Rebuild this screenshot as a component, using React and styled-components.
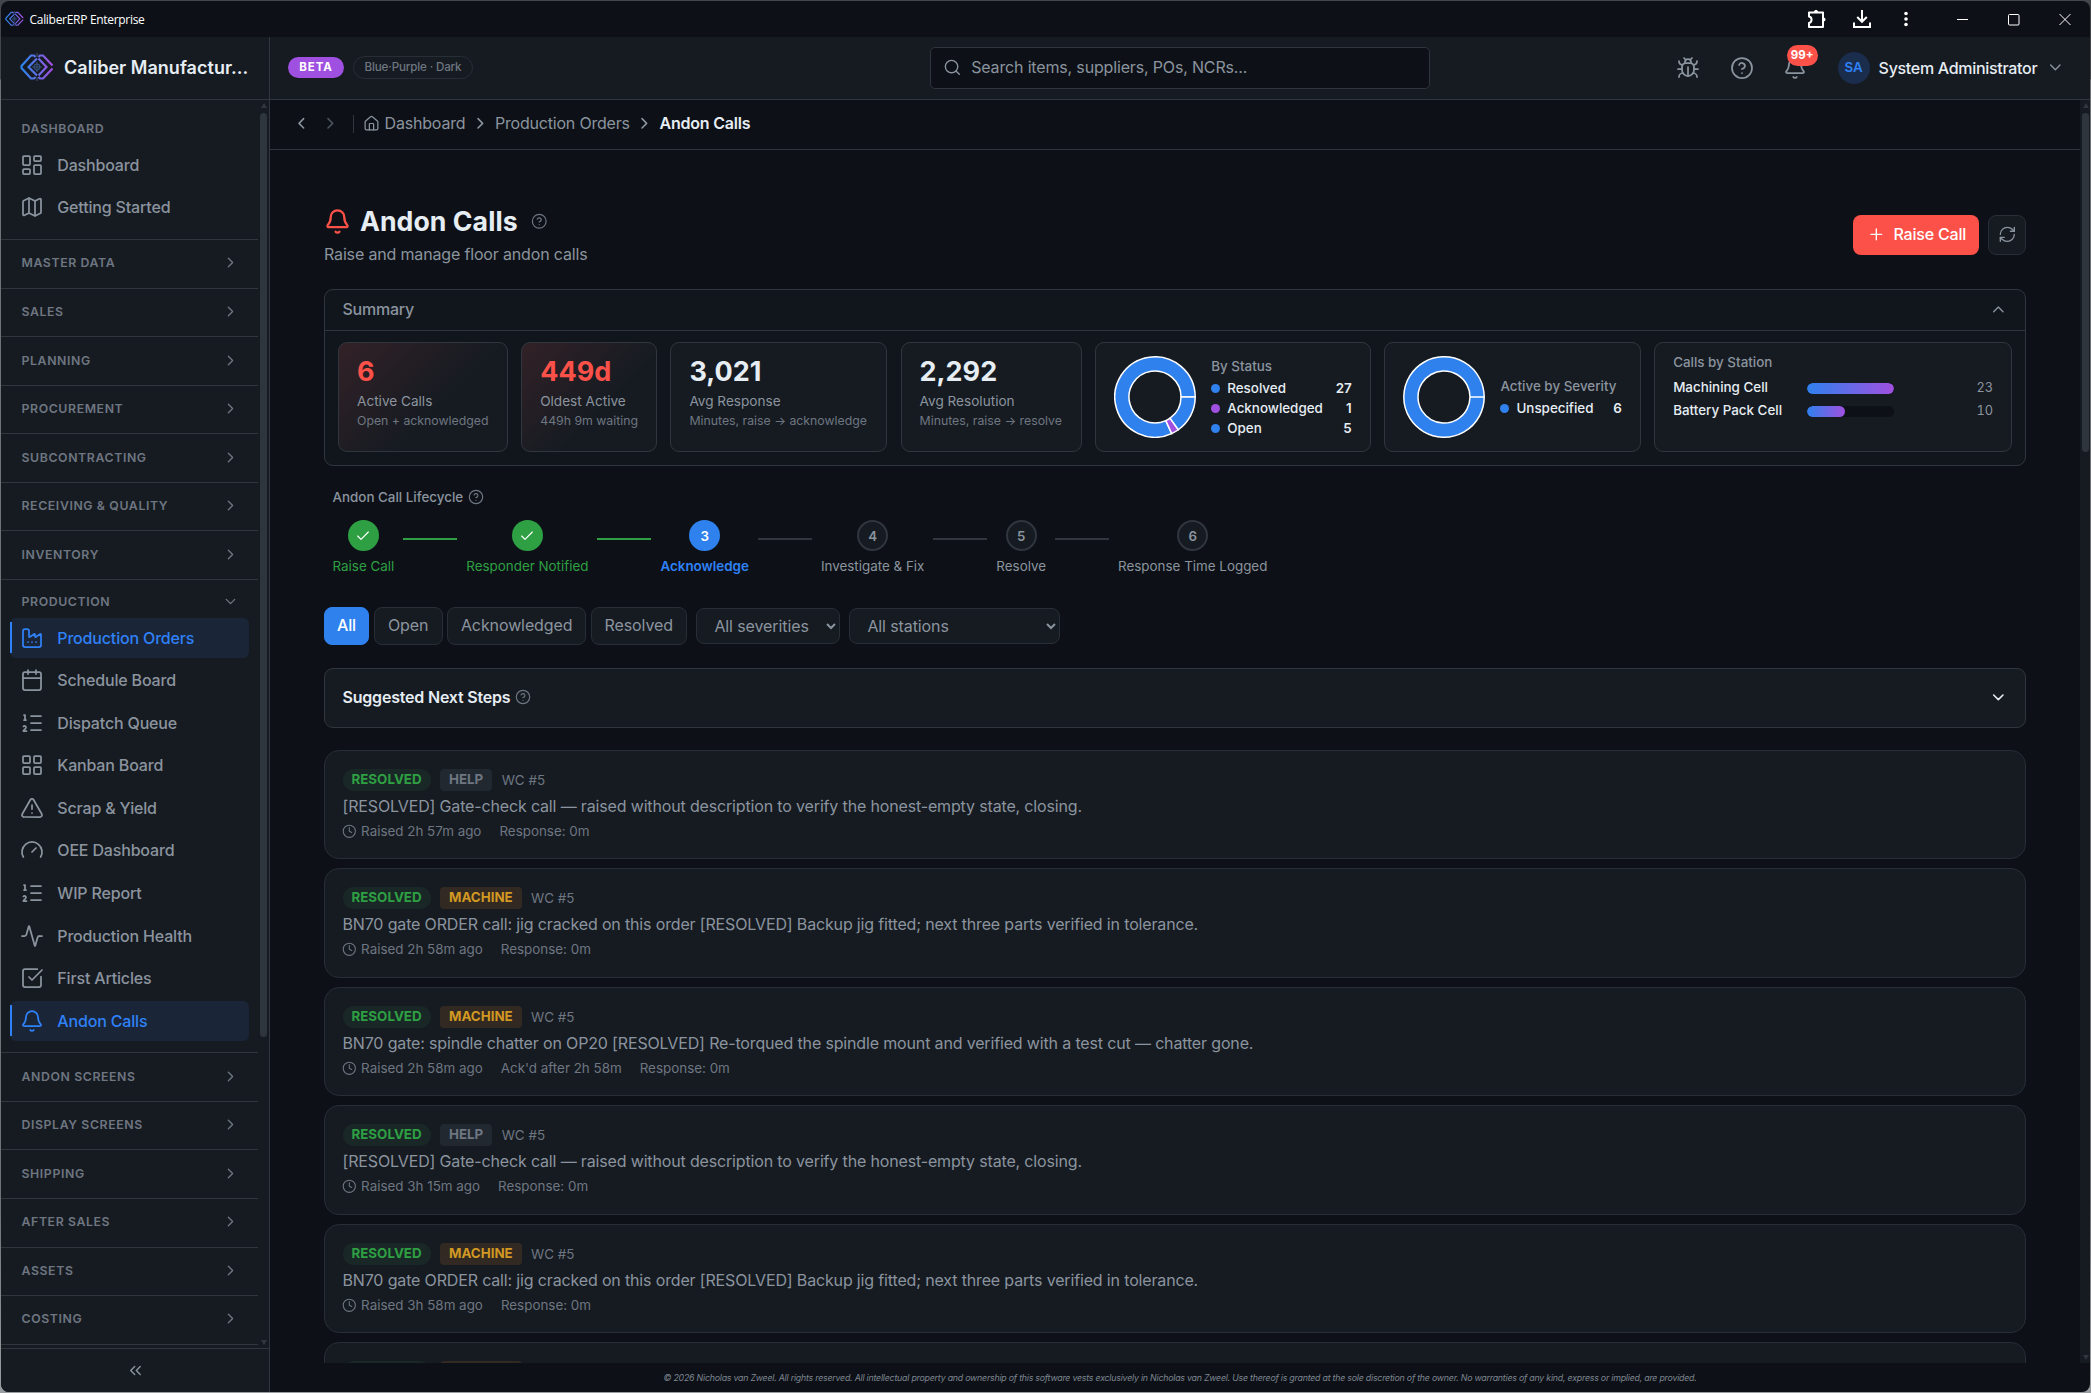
import React, { useState } from "react";
import styled, { createGlobalStyle, css } from "styled-components";
import {
  Activity,
  Bell,
  Bug,
  Calendar,
  Check,
  ChevronDown,
  ChevronLeft,
  ChevronRight,
  ChevronUp,
  ChevronsLeft,
  CircleQuestionMark,
  Clock,
  Factory,
  Gauge,
  House,
  LayoutDashboard,
  LayoutGrid,
  ListOrdered,
  Map,
  Plus,
  RefreshCw,
  Search,
  SquareCheckBig,
  TriangleAlert,
} from "lucide-react";

const colors = {
  bg: "#0d1117",
  panel: "#11161d",
  surface: "#161b22",
  border: "#30363d",
  borderSoft: "#282e36",
  text: "#e6edf3",
  muted: "#8b949e",
  dim: "#6e7681",
  blue: "#2f81f7",
  fill: "#2f81ed",
  purple: "#a050e0",
  green: "#2ea043",
  amber: "#d29922",
  red: "#fb5149",
};

const GlobalStyle = createGlobalStyle`
  * {
    box-sizing: border-box;
  }
  body {
    margin: 0;
    background: #0d1117;
    color: ${colors.text};
    font-family: Inter, "Liberation Sans", sans-serif;
    font-size: 16px;
  }
  button, select {
    font-family: inherit;
  }
  svg {
    flex-shrink: 0;
  }
`;

const Desktop = styled.div`
  width: 2091px;
  height: 1393px;
  padding: 1px;
  overflow: hidden;
  background: linear-gradient(#43474b, #43474b 79px, #6f7376 80px, #6f7376 1200px, #9a9da0 1390px);
`;

const Window = styled.div`
  height: 100%;
  display: flex;
  flex-direction: column;
  overflow: hidden;
  border-radius: 8px;
  background: ${colors.bg};
`;

const TitleBar = styled.div`
  flex: none;
  height: 36px;
  display: flex;
  align-items: center;
  padding: 0 15px 1px 3.5px;
`;

const TitleText = styled.span`
  margin-left: 6px;
  padding-top: 2px;
  color: #fff;
  font-family: "Open Sans", "Noto Sans", sans-serif;
  font-size: 12px;
  letter-spacing: -0.3px;
`;

const WindowControls = styled.div`
  margin-left: auto;
  display: flex;
  align-items: center;
`;

const ControlIcon = styled.svg`
  width: 20px;
  height: 20px;
  fill: none;
  stroke: #fff;
  stroke-width: ${(p) => p.$stroke || 1};
  margin-left: ${(p) => p.$gap || 0}px;
`;

const Body = styled.div`
  flex: 1;
  min-height: 0;
  display: flex;
`;

const Sidebar = styled.aside`
  flex: none;
  width: 269px;
  display: flex;
  flex-direction: column;
  background: ${colors.surface};
  border-right: 1px solid ${colors.border};
`;

const Brand = styled.div`
  flex: none;
  height: 63px;
  display: flex;
  align-items: center;
  gap: 10px;
  padding: 0 12px 2px 19px;
  border-bottom: 1px solid ${colors.border};
`;

const BrandName = styled.span`
  white-space: nowrap;
  font-size: 18px;
  font-weight: 600;
  letter-spacing: 0.03px;
`;

const NavScroll = styled.div`
  flex: 1;
  min-height: 0;
  display: flex;
`;

const NavList = styled.nav`
  width: 257px;
  overflow: hidden;
`;

const NavGroup = styled.section`
  border-top: ${(p) => (p.$first ? "none" : `1px solid ${colors.border}`)};
  padding-top: ${(p) => (p.$first ? "14px" : "0")};
  padding-bottom: ${(p) => (p.$open ? (p.$first ? "9px" : "8.4px") : "0")};

  &:last-child {
    border-bottom: 1px solid ${colors.border};
  }
`;

const NavHeading = styled.div`
  height: ${(p) => p.$height}px;
  display: flex;
  align-items: center;
  justify-content: space-between;
  padding: ${(p) => (p.$open ? "4px 19.5px 0 20.5px" : "0 19.5px 2px 20.5px")};
  color: ${colors.dim};
  font-size: 12.3px;
  font-weight: 600;
  letter-spacing: 0.6px;
  text-transform: uppercase;
`;

const NavItem = styled.div`
  height: 40px;
  margin: 0 9px 2.6px;
  display: flex;
  align-items: center;
  gap: 13px;
  padding: 0 0 1px ${(p) => (p.$active ? "8.3px" : "10.3px")};
  border-radius: 6px;
  color: ${colors.muted};
  font-size: 16px;
  font-weight: 500;
  letter-spacing: -0.17px;

  ${(p) =>
    p.$active &&
    css`
      color: ${colors.blue};
      background: #1a2537;

      &::before {
        content: "";
        width: 2px;
        height: 31px;
        margin-left: -8.3px;
        margin-right: -4.7px;
        background: ${colors.blue};
      }
    `}
`;

const ScrollTrack = styled.div`
  width: ${(p) => p.$width}px;
  display: flex;
  flex-direction: column;
  align-items: center;
  padding: 3px 0 3px ${(p) => p.$inset || 0}px;
  background: ${colors.surface};
`;

const ScrollThumb = styled.div`
  width: 7px;
  height: ${(p) => p.$height}px;
  margin: 5px 0 auto;
  border-radius: 4px;
  background: #2f353d;
`;

const ScrollArrow = styled.div`
  border: 3.5px solid transparent;
  border-top-width: ${(p) => (p.$up ? 0 : 5)}px;
  border-bottom-width: ${(p) => (p.$up ? 5 : 0)}px;
  border-${(p) => (p.$up ? "bottom" : "top")}-color: #30363d;
`;

const Collapse = styled.div`
  flex: none;
  height: 44px;
  display: flex;
  align-items: center;
  justify-content: center;
  border-top: 1px solid ${colors.border};
  color: ${colors.muted};
`;

const Main = styled.div`
  flex: 1;
  min-width: 0;
  display: flex;
  flex-direction: column;
`;

const TopBar = styled.header`
  flex: none;
  height: 63px;
  display: grid;
  grid-template-columns: 1fr 500px 1fr;
  align-items: center;
  padding: 0 25px 1px 18px;
  background: ${colors.surface};
  border-bottom: 1px solid ${colors.border};
`;

const TopLeft = styled.div`
  display: flex;
  align-items: center;
  gap: 9px;
`;

const BetaPill = styled.span`
  height: 21px;
  width: 56px;
  line-height: 20px;
  text-align: center;
  border-radius: 11px;
  background: ${colors.purple};
  color: #fff;
  font-size: 11.5px;
  font-weight: 700;
  letter-spacing: 0.9px;
`;

const ThemePill = styled.span`
  height: 23px;
  width: 120px;
  line-height: 20px;
  text-align: center;
  border: 1px solid ${colors.borderSoft};
  border-radius: 12px;
  color: ${colors.dim};
  font-size: 11.6px;
  font-weight: 500;
  letter-spacing: -0.15px;
`;

const SearchBox = styled.div`
  height: 42px;
  display: flex;
  align-items: center;
  gap: 9.5px;
  padding: 0 0 1px 12px;
  margin-left: 3.5px;
  margin-right: -3.5px;
  border: 1px solid ${colors.border};
  border-radius: 5px;
  background: ${colors.bg};
  color: ${colors.muted};
  font-size: 16px;
  letter-spacing: -0.16px;
`;

const TopRight = styled.div`
  display: flex;
  align-items: center;
  justify-content: flex-end;
  color: ${colors.muted};
`;

const IconSlot = styled.span`
  position: relative;
  display: flex;
  width: 24px;
  margin-right: ${(p) => p.$gap}px;
`;

const CountBadge = styled.span`
  position: absolute;
  top: -11px;
  left: 4px;
  width: 31px;
  height: 21px;
  border-radius: 11px;
  line-height: 20px;
  text-align: center;
  background: ${colors.red};
  color: #fff;
  font-size: 11.5px;
  font-weight: 700;
`;

const Avatar = styled.span`
  width: 32px;
  height: 32px;
  margin-right: 9px;
  border-radius: 50%;
  line-height: 31px;
  text-align: center;
  background: #1b2d4c;
  color: ${colors.blue};
  font-size: 13.3px;
  font-weight: 600;
`;

const UserName = styled.span`
  margin-right: 9px;
  color: ${colors.text};
  font-size: 16px;
  font-weight: 500;
  letter-spacing: -0.3px;
`;

const PageScroll = styled.div`
  flex: 1;
  min-height: 0;
  display: flex;
`;

const Page = styled.div`
  flex: 1;
  min-width: 0;
  overflow: hidden;
`;

const Breadcrumbs = styled.div`
  height: 50px;
  display: flex;
  align-items: center;
  padding: 0 0 2px 21.5px;
  border-bottom: 1px solid ${colors.border};
  color: ${colors.muted};
`;

const Crumb = styled.span`
  padding-bottom: 1px;
  color: ${(p) => (p.$current ? colors.text : colors.muted)};
  font-weight: ${(p) => (p.$current ? 600 : 400)};
  letter-spacing: -0.2px;
`;

const CrumbArrow = styled(ChevronRight)`
  margin: 0 5.5px;
`;

const HistoryArrow = styled.span`
  display: flex;
  margin-right: 10.5px;
  opacity: ${(p) => (p.$disabled ? 0.5 : 1)};
`;

const CrumbDivider = styled.span`
  width: 1px;
  height: 18px;
  margin: 0 9px 0 3.5px;
  background: ${colors.border};
`;

const Content = styled.main`
  padding: 53px 54px 0;
`;

const PageHeader = styled.div`
  display: flex;
  align-items: center;
  height: 63px;
  margin-bottom: 23px;
`;

const Heading = styled.h1`
  height: 36px;
  margin: 0 0 3px;
  display: flex;
  align-items: center;
  font-size: 26.67px;
  font-weight: 700;
`;

const HeadingText = styled.span`
  margin: 0 13px 0 9px;
  letter-spacing: 0.05px;
`;

const Subtitle = styled.div`
  height: 24px;
  line-height: 24px;
  color: ${colors.muted};
  letter-spacing: -0.16px;
`;

const HeaderActions = styled.div`
  margin-left: auto;
  display: flex;
  gap: 9px;
`;

const RaiseButton = styled.button`
  width: 126px;
  height: 40px;
  padding: 0 0 1px 1px;
  display: flex;
  align-items: center;
  justify-content: center;
  gap: 8px;
  border: 0;
  border-radius: 8px;
  background: ${colors.red};
  color: #fff;
  font-size: 16px;
  font-weight: 500;
  letter-spacing: -0.2px;
`;

const RefreshButton = styled.button`
  width: 38px;
  height: 40px;
  padding: 0;
  display: flex;
  align-items: center;
  justify-content: center;
  border: 1px solid ${colors.borderSoft};
  border-radius: 8px;
  background: ${colors.surface};
  color: ${colors.muted};
`;

const SummaryPanel = styled.section`
  height: 177px;
  border: 1px solid ${colors.border};
  border-radius: 9px;
  background: ${colors.panel};
`;

const SummaryHead = styled.div`
  height: 41px;
  display: flex;
  align-items: center;
  justify-content: space-between;
  padding: 0 17.5px 2px;
  border-bottom: 1px solid ${colors.border};
  color: ${colors.muted};
  font-weight: 500;
  letter-spacing: -0.25px;
`;

const SummaryCards = styled.div`
  display: grid;
  grid-template-columns: 170px 136px 217px 181px 276px 257px 1fr;
  gap: 13.2px;
  padding: 11px 13px;
`;

const SummaryCard = styled.div`
  height: 110px;
  padding: 12px 18px 0;
  border: 1px solid ${colors.border};
  border-radius: 9px;
  white-space: nowrap;
  background: ${(p) =>
    p.$alert
      ? `linear-gradient(135deg, rgba(251, 81, 73, 0.12), rgba(251, 81, 73, 0) 60%) ${colors.surface}`
      : colors.surface};
`;

const StatValue = styled.div`
  height: 36px;
  line-height: 34px;
  font-size: 27px;
  font-weight: 700;
  color: ${(p) => (p.$alert ? colors.red : colors.text)};
`;

const StatLabel = styled.div`
  height: 20px;
  line-height: 20px;
  color: ${colors.muted};
  font-size: 13.6px;
`;

const StatHint = styled.div`
  height: 19px;
  line-height: 19px;
  color: ${colors.dim};
  font-size: 12.3px;
`;

const ChartCard = styled(SummaryCard)`
  display: flex;
  align-items: center;
  gap: 15px;
  padding: 0 18px 0 18.5px;
`;

const Legend = styled.div`
  flex: 1;
  font-size: 13.4px;
  font-weight: 500;
`;

const LegendTitle = styled.div`
  height: ${(p) => p.$height || 21}px;
  line-height: 18px;
  color: ${colors.muted};
  font-size: 13.4px;
  font-weight: 500;
`;

const LegendRow = styled.div`
  height: 20px;
  display: flex;
  align-items: center;
  gap: 7px;
`;

const Dot = styled.span`
  width: 9px;
  height: 9px;
  margin-top: 2px;
  border-radius: 50%;
  background: ${(p) => p.$color};
`;

const LegendCount = styled.span`
  margin-left: auto;
  font-weight: 600;
`;

const StationCard = styled(SummaryCard)`
  padding-top: 10px;
`;

const StationRow = styled.div`
  height: 23px;
  display: grid;
  grid-template-columns: 134px 87px 1fr;
  align-items: center;
  color: ${colors.text};
  font-size: 13.4px;
  font-weight: 500;
`;

const BarTrack = styled.div`
  height: 11px;
  margin-top: 2px;
  border-radius: 6px;
  overflow: hidden;
  background: ${colors.bg};
`;

const BarFill = styled.div`
  height: 100%;
  border-radius: 6px;
  background: linear-gradient(90deg, ${colors.fill}, ${colors.purple});
`;

const StationCount = styled.span`
  text-align: right;
  color: ${colors.muted};
  font-size: 12.8px;
  font-weight: 400;
  font-variant-numeric: tabular-nums;
`;

const LifecycleTitle = styled.div`
  height: 22px;
  margin: 20px 0 12px 8.5px;
  display: flex;
  align-items: center;
  gap: 4.5px;
  color: ${colors.muted};
  font-size: 13.4px;
  font-weight: 500;
`;

const HelpIcon = styled(CircleQuestionMark)`
  color: ${colors.dim};
`;

const Steps = styled.div`
  height: 87px;
  margin-left: 8.5px;
  display: flex;
  align-items: flex-start;
  gap: 9px;
`;

const Step = styled.div`
  display: flex;
  flex-direction: column;
  align-items: center;
  gap: 7px;
  white-space: nowrap;
  color: ${colors.muted};
  font-size: 13.4px;

  ${(p) =>
    p.$state === "done" &&
    css`
      color: ${colors.green};
    `}
  ${(p) =>
    p.$state === "current" &&
    css`
      color: ${colors.blue};
      font-weight: 600;
    `}
`;

const StepCircle = styled.span`
  width: 31px;
  height: 31px;
  display: flex;
  align-items: center;
  justify-content: center;
  border-radius: 50%;
  border: 2px solid ${colors.border};
  background: ${colors.surface};
  font-size: 13.3px;
  font-weight: 600;

  ${(p) =>
    p.$state &&
    css`
      color: #fff;
      border-color: transparent;
      background: ${p.$state === "done" ? colors.green : colors.fill} border-box;
    `}
`;

const StepLine = styled.span`
  width: 54px;
  height: 2px;
  margin-top: 18px;
  background: ${(p) => (p.$done ? colors.green : colors.border)};
`;

const Filters = styled.div`
  height: 38px;
  display: flex;
  align-items: center;
  margin-bottom: 23px;
`;

const FilterButton = styled.button`
  width: ${(p) => p.$width}px;
  height: 38px;
  padding: 0 0 2px;
  margin-right: 4.6px;
  border: 1px solid ${(p) => (p.$active ? colors.fill : colors.borderSoft)};
  border-radius: 8px;
  background: ${(p) => (p.$active ? colors.fill : colors.surface)};
  color: ${(p) => (p.$active ? "#fff" : colors.muted)};
  font-size: 16px;
  font-weight: ${(p) => (p.$active ? 500 : 400)};
  letter-spacing: -0.1px;
`;

const FilterSelect = styled.select`
  width: ${(p) => p.$width}px;
  height: 36px;
  padding: 0 0 1px 13px;
  margin: 0 4px 0 5px;
  border: 1px solid ${colors.borderSoft};
  border-radius: 8px;
  background: ${colors.surface};
  color: ${colors.muted};
  font-size: 16px;
  letter-spacing: -0.1px;
`;

const Suggested = styled.section`
  height: 60px;
  display: flex;
  align-items: center;
  gap: 5px;
  padding: 0 17.5px 2px;
  margin-bottom: 22px;
  border: 1px solid ${colors.border};
  border-radius: 9px;
  background: ${colors.surface};
  font-weight: 600;
  letter-spacing: -0.2px;
`;

const Spacer = styled.span`
  flex: 1;
`;

const CallCard = styled.article`
  height: 109.4px;
  margin-bottom: 9.1px;
  padding: 18px 17.5px 0;
  border: 1px solid ${colors.borderSoft};
  border-radius: 15px;
  background: ${colors.surface};
`;

const Tags = styled.div`
  display: flex;
  align-items: center;
  gap: 9.4px;
  height: 22px;
  color: ${colors.dim};
  font-size: 13.4px;
`;

const Tag = styled.span`
  height: 22px;
  line-height: 21px;
  padding: 0 9px;
  border-radius: ${(p) => (p.$round ? "11px" : "4px")};
  color: ${(p) => p.$color};
  background: ${(p) => p.$bg};
  font-size: 13.35px;
  font-weight: 700;
`;

const CallText = styled.div`
  height: 30px;
  line-height: 31px;
  color: ${colors.muted};
  letter-spacing: -0.155px;
`;

const CallMeta = styled.div`
  height: 20px;
  display: flex;
  align-items: center;
  color: ${colors.dim};
  font-size: 13.4px;

  svg {
    margin-left: -1px;
  }
  span {
    margin: 0 13px 0 5px;
  }
`;

const Copyright = styled.footer`
  flex: none;
  height: 29px;
  line-height: 30px;
  text-align: center;
  color: #7d8590;
  font-size: 8.8px;
  font-style: italic;
  letter-spacing: -0.22px;
`;

const navGroups = [
  {
    title: "Dashboard",
    first: true,
    items: [
      { label: "Dashboard", icon: LayoutDashboard },
      { label: "Getting Started", icon: Map },
    ],
  },
  { title: "Master Data" },
  { title: "Sales" },
  { title: "Planning" },
  { title: "Procurement" },
  { title: "Subcontracting" },
  { title: "Receiving & Quality" },
  { title: "Inventory" },
  {
    title: "Production",
    items: [
      { label: "Production Orders", icon: Factory, active: true },
      { label: "Schedule Board", icon: Calendar },
      { label: "Dispatch Queue", icon: ListOrdered },
      { label: "Kanban Board", icon: LayoutGrid },
      { label: "Scrap & Yield", icon: TriangleAlert },
      { label: "OEE Dashboard", icon: Gauge },
      { label: "WIP Report", icon: ListOrdered },
      { label: "Production Health", icon: Activity },
      { label: "First Articles", icon: SquareCheckBig },
      { label: "Andon Calls", icon: Bell, active: true },
    ],
  },
  { title: "Andon Screens" },
  { title: "Display Screens" },
  { title: "Shipping" },
  { title: "After Sales" },
  { title: "Assets" },
  { title: "Costing" },
];

const stats = [
  { value: "6", label: "Active Calls", hint: "Open + acknowledged", alert: true },
  { value: "449d", label: "Oldest Active", hint: "449h 9m waiting", alert: true },
  { value: "3,021", label: "Avg Response", hint: "Minutes, raise → acknowledge" },
  { value: "2,292", label: "Avg Resolution", hint: "Minutes, raise → resolve" },
];

const byStatus = [
  { label: "Resolved", count: 27, color: colors.fill },
  { label: "Acknowledged", count: 1, color: colors.purple },
  { label: "Open", count: 5, color: colors.fill },
];

const bySeverity = [{ label: "Unspecified", count: 6, color: colors.fill }];

const stations = [
  { label: "Machining Cell", count: 23 },
  { label: "Battery Pack Cell", count: 10 },
];

const steps = [
  { label: "Raise Call", state: "done" },
  { label: "Responder Notified", state: "done" },
  { label: "Acknowledge", state: "current" },
  { label: "Investigate & Fix" },
  { label: "Resolve" },
  { label: "Response Time Logged" },
];

const filters = [
  { label: "All", width: 45 },
  { label: "Open", width: 69 },
  { label: "Acknowledged", width: 139 },
  { label: "Resolved", width: 96 },
];

const GATE_CHECK =
  "[RESOLVED] Gate-check call — raised without description to verify the honest-empty state, closing.";
const JIG_ORDER =
  "BN70 gate ORDER call: jig cracked on this order [RESOLVED] Backup jig fitted; next three parts verified in tolerance.";
const SPINDLE =
  "BN70 gate: spindle chatter on OP20 [RESOLVED] Re-torqued the spindle mount and verified with a test cut — chatter gone.";

const calls = [
  { type: "HELP", text: GATE_CHECK, meta: ["Raised 2h 57m ago", "Response: 0m"] },
  { type: "MACHINE", text: JIG_ORDER, meta: ["Raised 2h 58m ago", "Response: 0m"] },
  {
    type: "MACHINE",
    text: SPINDLE,
    meta: ["Raised 2h 58m ago", "Ack'd after 2h 58m", "Response: 0m"],
  },
  { type: "HELP", text: GATE_CHECK, meta: ["Raised 3h 15m ago", "Response: 0m"] },
  { type: "MACHINE", text: JIG_ORDER, meta: ["Raised 3h 58m ago", "Response: 0m"] },
  { type: "MACHINE", text: SPINDLE, meta: ["Raised 3h 58m ago", "Response: 0m"] },
];

const Logo = ({ width, id }) => (
  <svg width={width} height={(width * 28) / 34} viewBox="0 0 34 28" fill="none">
    <defs>
      <linearGradient id={id} x1="0" y1="0" x2="34" y2="0" gradientUnits="userSpaceOnUse">
        <stop offset="0.1" stopColor="#2f81e8" />
        <stop offset="0.5" stopColor="#5f6fe6" />
        <stop offset="0.9" stopColor="#a050e0" />
      </linearGradient>
    </defs>
    <g stroke={`url(#${id})`} strokeWidth="2.2">
      <path d="M15.5 4 L14 2.5 H11 L1.5 13 V15 L11 25.5 H14 L15.5 24" />
      <path d="M18.5 4 L20 2.5 H23 L32.5 12.5" />
      <path d="M18.5 24 L20 25.5 H23 L32.5 15.5" />
      <path d="M17 5.5 L8.5 14 L17 22.5" />
      <path d="M18.5 5.5 L26.5 14 L18.5 22.5" />
    </g>
    <path
      d="M17 0 V4 M17 9 V19 M17 24 V28 M12 14 H22"
      stroke="#3c5274"
      strokeWidth="1.2"
    />
    <circle cx="17" cy="14" r="2.8" stroke="#31507f" strokeWidth="1.2" />
  </svg>
);

const polar = (r, deg) => {
  const a = (deg * Math.PI) / 180;
  return `${(41 + r * Math.cos(a)).toFixed(2)} ${(41 - r * Math.sin(a)).toFixed(2)}`;
};

// Slices run counter-clockwise from three o'clock.
const Donut = ({ data }) => {
  const total = data.reduce((sum, d) => sum + d.count, 0);
  let angle = 0;
  return (
    <svg width="82" height="82" viewBox="0 0 82 82">
      {data.map((d) => {
        const start = angle;
        const end = angle + Math.min((d.count / total) * 360, 359.9);
        angle = end;
        const large = end - start > 180 ? 1 : 0;
        return (
          <path
            key={d.label}
            fill={d.color}
            stroke="#fff"
            strokeWidth="1.5"
            d={`M${polar(40.2, start)} A40.2 40.2 0 ${large} 0 ${polar(40.2, end)} L${polar(
              26,
              end
            )} A26 26 0 ${large} 1 ${polar(26, start)} Z`}
          />
        );
      })}
    </svg>
  );
};

const ChartLegend = ({ title, titleHeight, data }) => (
  <Legend>
    <LegendTitle $height={titleHeight}>{title}</LegendTitle>
    {data.map((d) => (
      <LegendRow key={d.label}>
        <Dot $color={d.color} />
        {d.label}
        <LegendCount>{d.count}</LegendCount>
      </LegendRow>
    ))}
  </Legend>
);

const headingHeight = (group) => {
  if (group.first) return 31;
  return group.items ? 38 : 47.55;
};

const Nav = () => (
  <NavList>
    {navGroups.map((group) => (
      <NavGroup key={group.title} $first={group.first} $open={!!group.items}>
        <NavHeading $height={headingHeight(group)} $open={group.items && !group.first}>
          {group.title}
          {group.first ? null : group.items ? (
            <ChevronDown size={17} strokeWidth={1.9} />
          ) : (
            <ChevronRight size={17} strokeWidth={1.9} />
          )}
        </NavHeading>
        {group.items?.map(({ label, icon: Icon, active }) => (
          <NavItem key={label} $active={active}>
            <Icon size={24} strokeWidth={1.75} />
            {label}
          </NavItem>
        ))}
      </NavGroup>
    ))}
  </NavList>
);

const Call = ({ type, text, meta }) => (
  <CallCard>
    <Tags>
      <Tag $round $color={colors.green} $bg="#192826">
        RESOLVED
      </Tag>
      {type === "HELP" ? (
        <Tag $color={colors.dim} $bg="#212830">
          HELP
        </Tag>
      ) : (
        <Tag $color={colors.amber} $bg="#322a22">
          MACHINE
        </Tag>
      )}
      WC #5
    </Tags>
    <CallText>{text}</CallText>
    <CallMeta>
      <Clock size={14.6} strokeWidth={1.75} />
      {meta.map((m) => (
        <span key={m}>{m}</span>
      ))}
    </CallMeta>
  </CallCard>
);

const App = () => {
  const [filter, setFilter] = useState("All");

  return (
    <Desktop>
      <GlobalStyle />
      <Window>
        <TitleBar>
          <Logo width={19} id="logo-small" />
          <TitleText>CaliberERP Enterprise</TitleText>
          <WindowControls>
            <ControlIcon viewBox="0 0 20 20" $stroke={2}>
              <path
                d="M2 3.5 H16 V18 H2 V14 C5.4 13.4 5.4 8.2 2 7.6 Z"
                strokeLinejoin="round"
              />
              <path
                d="M7 3 C7 0.4 11 0.4 11 3 Z M16.5 8.5 C19.2 8.5 19.2 12.5 16.5 12.5 Z"
                fill="#fff"
                stroke="none"
              />
            </ControlIcon>
            <ControlIcon viewBox="0 0 20 20" $stroke={2} $gap={25}>
              <path d="M10 1 V12.5 M5.2 8 L10 12.8 L14.8 8 M2 13.5 V18 H18 V13.5" />
            </ControlIcon>
            <ControlIcon viewBox="0 0 20 20" $gap={24}>
              <g fill="#fff" stroke="none">
                <circle cx="10" cy="4.5" r="1.8" />
                <circle cx="10" cy="10" r="1.8" />
                <circle cx="10" cy="15.5" r="1.8" />
              </g>
            </ControlIcon>
            <ControlIcon viewBox="0 0 20 20" $gap={37}>
              <path d="M4 10.5 H15" />
            </ControlIcon>
            <ControlIcon viewBox="0 0 20 20" $gap={31}>
              <rect x="4.5" y="5.5" width="10.5" height="10.5" rx="1" />
            </ControlIcon>
            <ControlIcon viewBox="0 0 20 20" $gap={31}>
              <path d="M4.5 5 L15.5 16 M15.5 5 L4.5 16" />
            </ControlIcon>
          </WindowControls>
        </TitleBar>
        <Body>
          <Sidebar>
            <Brand>
              <Logo width={34} id="logo-brand" />
              <BrandName>Caliber Manufactur...</BrandName>
            </Brand>
            <NavScroll>
              <Nav />
              <ScrollTrack $width={11}>
                <ScrollArrow $up />
                <ScrollThumb $height={924} />
                <ScrollArrow />
              </ScrollTrack>
            </NavScroll>
            <Collapse>
              <ChevronsLeft size={19} strokeWidth={1.75} />
            </Collapse>
          </Sidebar>
          <Main>
            <TopBar>
              <TopLeft>
                <BetaPill>BETA</BetaPill>
                <ThemePill>Blue·Purple · Dark</ThemePill>
              </TopLeft>
              <SearchBox>
                <Search size={18.67} strokeWidth={1.75} />
                Search items, suppliers, POs, NCRs...
              </SearchBox>
              <TopRight>
                <IconSlot $gap={30}>
                  <Bug size={24} strokeWidth={1.75} />
                </IconSlot>
                <IconSlot $gap={29}>
                  <CircleQuestionMark size={24} strokeWidth={1.75} />
                </IconSlot>
                <IconSlot $gap={31}>
                  <Bell size={24} strokeWidth={1.75} />
                  <CountBadge>99+</CountBadge>
                </IconSlot>
                <Avatar>SA</Avatar>
                <UserName>System Administrator</UserName>
                <ChevronDown size={18.67} strokeWidth={1.75} />
              </TopRight>
            </TopBar>
            <PageScroll>
              <Page>
                <Breadcrumbs>
                  <HistoryArrow>
                    <ChevronLeft size={18.67} />
                  </HistoryArrow>
                  <HistoryArrow $disabled>
                    <ChevronRight size={18.67} />
                  </HistoryArrow>
                  <CrumbDivider />
                  <House size={17} strokeWidth={1.75} />
                  <Crumb>&nbsp;Dashboard</Crumb>
                  <CrumbArrow size={18.67} />
                  <Crumb>Production Orders</Crumb>
                  <CrumbArrow size={18.67} />
                  <Crumb $current>Andon Calls</Crumb>
                </Breadcrumbs>
                <Content>
                  <PageHeader>
                    <div>
                      <Heading>
                        <Bell size={27} strokeWidth={2} color={colors.red} />
                        <HeadingText>Andon Calls</HeadingText>
                        <HelpIcon size={16.5} strokeWidth={1.75} />
                      </Heading>
                      <Subtitle>Raise and manage floor andon calls</Subtitle>
                    </div>
                    <HeaderActions>
                      <RaiseButton>
                        <Plus size={18.67} strokeWidth={1.75} />
                        Raise Call
                      </RaiseButton>
                      <RefreshButton>
                        <RefreshCw size={18.67} strokeWidth={1.75} />
                      </RefreshButton>
                    </HeaderActions>
                  </PageHeader>
                  <SummaryPanel>
                    <SummaryHead>
                      Summary
                      <ChevronUp size={18.67} strokeWidth={1.75} />
                    </SummaryHead>
                    <SummaryCards>
                      {stats.map((s) => (
                        <SummaryCard key={s.label} $alert={s.alert}>
                          <StatValue $alert={s.alert}>{s.value}</StatValue>
                          <StatLabel>{s.label}</StatLabel>
                          <StatHint>{s.hint}</StatHint>
                        </SummaryCard>
                      ))}
                      <ChartCard>
                        <Donut data={byStatus} />
                        <ChartLegend title="By Status" data={byStatus} />
                      </ChartCard>
                      <ChartCard>
                        <Donut data={bySeverity} />
                        <ChartLegend title="Active by Severity" data={bySeverity} />
                      </ChartCard>
                      <StationCard>
                        <LegendTitle $height={22.5}>Calls by Station</LegendTitle>
                        {stations.map((s) => (
                          <StationRow key={s.label}>
                            {s.label}
                            <BarTrack>
                              <BarFill style={{ width: `${(s.count / 23) * 100}%` }} />
                            </BarTrack>
                            <StationCount>{s.count}</StationCount>
                          </StationRow>
                        ))}
                      </StationCard>
                    </SummaryCards>
                  </SummaryPanel>
                  <LifecycleTitle>
                    Andon Call Lifecycle
                    <HelpIcon size={16} strokeWidth={1.75} />
                  </LifecycleTitle>
                  <Steps>
                    {steps.map((step, idx) => (
                      <React.Fragment key={step.label}>
                        {idx > 0 ? <StepLine $done={steps[idx - 1].state === "done"} /> : null}
                        <Step $state={step.state}>
                          <StepCircle $state={step.state}>
                            {step.state === "done" ? (
                              <Check size={16} strokeWidth={1.75} />
                            ) : (
                              idx + 1
                            )}
                          </StepCircle>
                          {step.label}
                        </Step>
                      </React.Fragment>
                    ))}
                  </Steps>
                  <Filters>
                    {filters.map((f) => (
                      <FilterButton
                        key={f.label}
                        $width={f.width}
                        $active={filter === f.label}
                        onClick={() => setFilter(f.label)}
                      >
                        {f.label}
                      </FilterButton>
                    ))}
                    <FilterSelect $width={144}>
                      <option>All severities</option>
                    </FilterSelect>
                    <FilterSelect $width={211}>
                      <option>All stations</option>
                    </FilterSelect>
                  </Filters>
                  <Suggested>
                    Suggested Next Steps
                    <HelpIcon size={16} strokeWidth={1.75} />
                    <Spacer />
                    <ChevronDown size={18.67} />
                  </Suggested>
                  {calls.map((call, idx) => (
                    <Call key={idx} {...call} />
                  ))}
                </Content>
              </Page>
              <ScrollTrack $width={10} $inset={1}>
                <ScrollArrow $up />
                <ScrollThumb $height={339} />
                <ScrollArrow />
              </ScrollTrack>
            </PageScroll>
            <Copyright>
              © 2026 Nicholas van Zweel. All rights reserved. All intellectual property and
              ownership of this software vests exclusively in Nicholas van Zweel. Use thereof is
              granted at the sole discretion of the owner. No warranties of any kind, express or
              implied, are provided.
            </Copyright>
          </Main>
        </Body>
      </Window>
    </Desktop>
  );
};

export default App;
